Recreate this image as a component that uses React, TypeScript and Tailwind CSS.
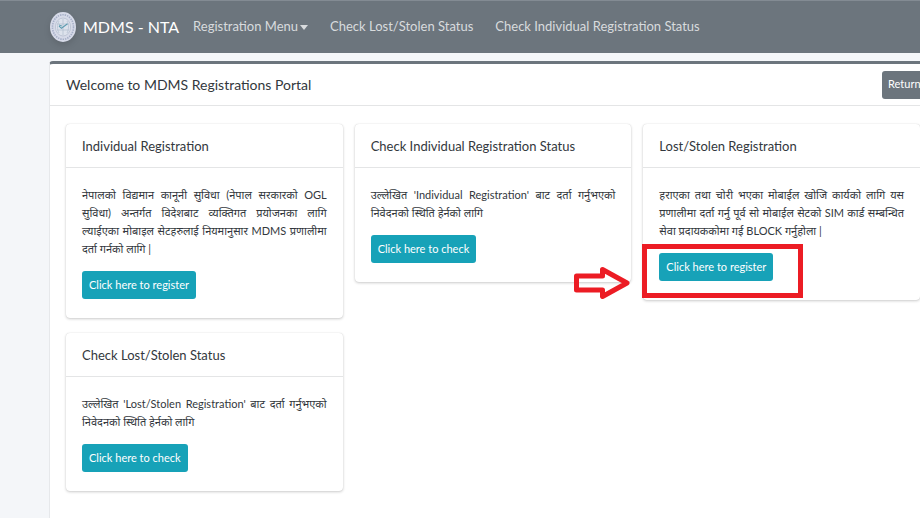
import clsx from "clsx";

type Service = {
  title: string;
  description: string;
  action: string;
  highlighted?: boolean;
};

const services: Service[] = [
  {
    title: "Individual Registration",
    description:
      "नेपालको विद्यमान कानूनी सुविधा (नेपाल सरकारको OGL सुविधा) अन्तर्गत विदेशबाट व्यक्तिगत प्रयोजनका लागि ल्याईएका मोबाइल सेटहरुलाई नियमानुसार MDMS प्रणालीमा दर्ता गर्नको लागि |",
    action: "Click here to register",
  },
  {
    title: "Check Individual Registration Status",
    description: "उल्लेखित 'Individual Registration' बाट दर्ता गर्नुभएको निवेदनको स्थिति हेर्नको लागि",
    action: "Click here to check",
  },
  {
    title: "Lost/Stolen Registration",
    description:
      "हराएका तथा चोरी भएका मोबाईल खोजि कार्यको लागि यस प्रणालीमा दर्ता गर्नु पूर्व सो मोबाईल सेटको SIM कार्ड सम्बन्धित सेवा प्रदायककोमा गई BLOCK गर्नुहोला |",
    action: "Click here to register",
    highlighted: true,
  },
  {
    title: "Check Lost/Stolen Status",
    description: "उल्लेखित 'Lost/Stolen Registration' बाट दर्ता गर्नुभएको निवेदनको स्थिति हेर्नको लागि",
    action: "Click here to check",
  },
];

function Seal() {
  return (
    <svg viewBox="0 0 26 30" className="h-[30px] w-[26px] drop-shadow-md" aria-hidden="true">
      <ellipse cx="13" cy="15" rx="13" ry="15" fill="#d6dae8" />
      <ellipse cx="13" cy="15" rx="10.5" ry="12.3" fill="none" stroke="#a5aec6" strokeWidth="1.6" strokeDasharray="1.4 1" />
      <ellipse cx="13" cy="15" rx="7.6" ry="9" fill="#dde2ec" stroke="#b2bacb" strokeWidth="0.7" />
      <path d="M7 12h12M7 18h12M13 7v16M9 9c-2 4-2 8 0 12M17 9c2 4 2 8 0 12" fill="none" stroke="#b0bdcf" strokeWidth="0.7" />
      <path d="M9 14l2.5 2.3 6-4.5" fill="none" stroke="#5d9bb0" strokeWidth="1.1" />
      <path d="M9 13l3 1" stroke="#5d9eb0" strokeWidth="0.9" />
    </svg>
  );
}

function Navbar() {
  return (
    <nav className="flex h-[53px] items-center gap-[22px] border-t border-[#838b93] bg-[#6c757d] pl-[50px] text-[13px] whitespace-nowrap text-[#d8dbdd]">
      <a href="#" className="-mr-2 flex items-center gap-[7px] text-base text-white">
        <Seal />
        MDMS - NTA
      </a>
      <button type="button" className="flex items-center gap-[2px]">
        Registration Menu
        <svg viewBox="0 0 8 5" className="h-[5px] w-2" aria-hidden="true">
          <path d="M0 0h8L4 5z" fill="currentColor" />
        </svg>
      </button>
      <a href="#">Check Lost/Stolen Status</a>
      <a href="#">Check Individual Registration Status</a>
    </nav>
  );
}

function Highlight() {
  return (
    <>
      <span className="pointer-events-none absolute -top-[9px] -bottom-[17px] -left-[17px] w-[161px] border-[5px] border-[#ec1c24]" />
      <svg
        viewBox="0 0 57 34"
        className="pointer-events-none absolute top-[13px] -left-[86px] h-[34px] w-[57px]"
        aria-hidden="true"
      >
        <path d="M3.5 10h26V3.5L54 17 29.5 30.5V24h-26z" fill="none" stroke="#ec1c24" strokeWidth="5" strokeLinejoin="round" />
      </svg>
    </>
  );
}

function ServiceCard({ service }: { service: Service }) {
  return (
    <section className="rounded bg-white shadow-[0_0_1px_rgba(0,0,0,0.15),0_1px_3px_rgba(0,0,0,0.2)]">
      <h2 className="flex h-11 items-center border-b border-[#e4e5e6] px-4 pt-[2px] text-[13px]">{service.title}</h2>
      <div className="px-4 pt-[18px] pb-[19px]">
        <p className="mb-[13px] text-justify text-[11px] leading-[18px]">{service.description}</p>
        <div className={clsx("w-fit", service.highlighted && "relative")}>
          <button type="button" className="block h-7 rounded-[3px] bg-[#17a2b8] px-[7px] text-[11px] whitespace-nowrap text-white">
            {service.action}
          </button>
          {service.highlighted && <Highlight />}
        </div>
      </div>
    </section>
  );
}

export default function App() {
  return (
    <div className="flex min-h-screen flex-col overflow-hidden bg-[#f4f6f9] font-['Lato','Noto_Sans',sans-serif] text-[#33383d]">
      <Navbar />
      <main className="-mr-4 ml-[49px] mt-2 flex-1 rounded-t border-t-[3px] border-l border-t-[#6c757d] border-l-[#e6e8eb] bg-white">
        <header className="flex h-[42px] items-center justify-between border-b border-[#e4e5e6] pl-4">
          <h1 className="text-sm">Welcome to MDMS Registrations Portal</h1>
          <button type="button" className="h-7 w-[54px] rounded-[3px] bg-[#6c757d] pl-[6px] text-left text-[11px] text-white">
            Return
          </button>
        </header>
        <div className="grid grid-cols-3 items-start gap-x-3 gap-y-[15px] px-4 pt-[18px]">
          {services.map((service) => (
            <ServiceCard key={service.title} service={service} />
          ))}
        </div>
      </main>
    </div>
  );
}
